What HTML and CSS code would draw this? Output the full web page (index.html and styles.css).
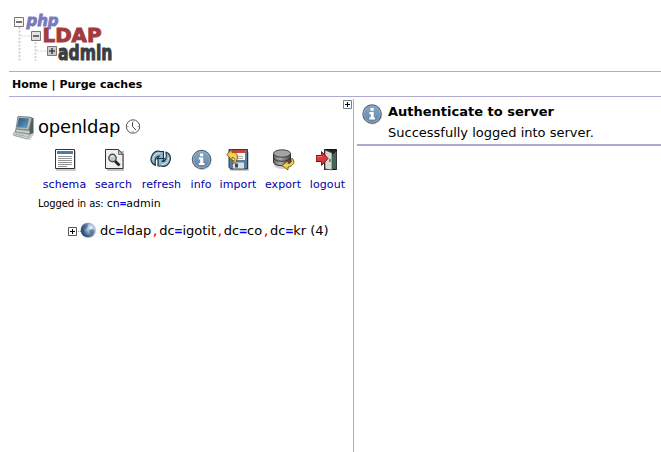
FILE: index.html
```html
<!DOCTYPE html>
<html lang="en">
<head>
<meta charset="utf-8">
<title>phpLDAPadmin</title>
<link rel="stylesheet" href="styles.css">
</head>
<body>
<svg width="0" height="0" class="defs" aria-hidden="true">
  <defs>
    <linearGradient id="box" x2="1" y2="1"><stop stop-color="#fff"/><stop offset="1" stop-color="#c4c4c4"/></linearGradient>
    <linearGradient id="steel" x2="0" y2="1"><stop stop-color="#83a5c6"/><stop offset="1" stop-color="#6588a8"/></linearGradient>
    <linearGradient id="screen" x2="1" y2="1"><stop stop-color="#245381"/><stop offset="1" stop-color="#6fa0c0"/></linearGradient>
    <radialGradient id="globe" cx=".7" cy=".35" r=".75"><stop stop-color="#f3f8fc"/><stop offset=".45" stop-color="#86a8cc"/><stop offset="1" stop-color="#1c3763"/></radialGradient>
    <linearGradient id="disk"><stop stop-color="#666"/><stop offset=".4" stop-color="#aaa"/><stop offset="1" stop-color="#444"/></linearGradient>
    <symbol id="info" viewBox="0 0 22 22">
      <circle cx="11.600" cy="11.800" r="9.600" fill="#999" opacity=".6"/>
      <circle cx="11" cy="11" r="9.700" fill="#4c5a66"/>
      <circle cx="11" cy="11" r="8.700" fill="#a5b7c7"/>
      <circle cx="11" cy="11" r="8" fill="url(#steel)"/>
      <path d="M9.500 5h3.200v2.700H9.500zM8.300 9h4.400v5.500H14v2H8.300v-2h1.400V11H8.300z" fill="#fff"/>
    </symbol>
  </defs>
</svg>
<header class="header">
  <svg class="logo" width="104" height="54" viewBox="10 9 104 54">
    <g stroke="#d2d2d6" stroke-width="2" stroke-dasharray="2 1.500" fill="none">
      <path d="M19.500 27v34M35.500 42v19"/><path d="M21 36h10M37 51h10" stroke-width="1.200"/>
    </g>
    <g font-family="DejaVu Sans" font-weight="bold">
      <text x="26.500" y="26" font-size="16.500" font-style="italic" textLength="32" lengthAdjust="spacingAndGlyphs" fill="#777bbd" stroke="#777bbd" stroke-width="1">php</text>
      <text x="42.500" y="42" font-size="20" textLength="59" lengthAdjust="spacingAndGlyphs" fill="#a03c3e" stroke="#a03c3e" stroke-width="1">LDAP</text>
      <text x="58" y="59.500" font-size="21" textLength="54.500" lengthAdjust="spacingAndGlyphs" fill="#3c3d3f" stroke="#3c3d3f" stroke-width="1">admin</text>
    </g>
    <g fill="url(#box)" stroke="#777"><path d="M14.500 17.500h9v9h-9zM31.500 31.500h9v9h-9zM47.500 46.500h9v9h-9z"/></g>
    <path d="M16 22h6M33 36h6M49 51h6M52 48v6" stroke="#444" stroke-width="1.600"/>
  </svg>
</header>
<nav class="menu"><a>Home</a> <span class="sep">|</span> <a>Purge caches</a></nav>
<main class="main">
  <aside class="tree">
    <svg class="expand" width="9" height="9"><path d="M.5.5h8v8h-8z" fill="#fff" stroke="#6c8390"/><path d="M2 4.500h5M4.500 2v5" stroke="#000"/></svg>
    <div class="server">
      <svg width="24" height="26" viewBox="12 114 24 26">
        <path d="M17 133l15 1 1-3 1 3-4 6-16-4z" fill="#999" opacity=".5"/>
        <path d="M28 117l5.500 1v15l-5 2z" fill="#4f5c61"/>
        <path d="M18 116.500l11 .5 3 1-3 12-13-1z" fill="#b2bdbc" stroke="#66716d" stroke-width=".8"/>
        <path d="M19 118l10 .5-2 9.500-10-.8z" fill="url(#screen)"/>
        <path d="M16 129l14 1.500v3.500l-15-2z" fill="#c3cbc8" stroke="#68726c" stroke-width=".7"/>
        <path d="M14.500 132l15 2.500-2.500 4.500-14-4z" fill="#d5dad5" stroke="#8a918c" stroke-width=".7"/>
        <path d="M15 134l12 2.500M17 133l-1 2M20 133.500l-1 3M23 134l-1 3" stroke="#929994" stroke-width=".6"/>
      </svg>
      <span class="server-name">openldap</span>
      <svg width="16" height="16" viewBox="0 0 16 16"><circle cx="8" cy="7.500" r="6.700" fill="#fff" stroke="#555"/><path d="M8 2v1.500M8 12V13.500M2 7.500h1.500M12.500 7.500H14" stroke="#999"/><path d="M7.500 3.500v4l3.500 3.500" fill="none" stroke="#444"/></svg>
    </div>
    <div class="tools">
      <a class="tool w44"><svg width="24" height="24" viewBox="0 0 24 24">
        <path d="M3 3h20v20H3z" fill="#aaa" opacity=".6"/><path d="M2.500 1.500h19v19h-19z" fill="#fff" stroke="#333"/>
        <path d="M4 3h16v3H4z" fill="#5279a5"/>
        <path d="M5 8.500h14M5 10.500h14M5 12.500h14M5 14.500h14M5 16.500h14M5 18.500h9" stroke="#92969b"/>
      </svg><span>schema</span></a>
      <a class="tool w38"><svg width="24" height="24" viewBox="0 0 24 24">
        <path d="M5 3h17v20H5z" fill="#999" opacity=".6"/><path d="M3.500 1.500h13l4.500 5V20.500H3.500z" fill="#f1f1ec" stroke="#333"/><path d="M16.500 2v4.500H21z" fill="#bbb" stroke="#555" stroke-width=".8"/>
        <path d="M12.500 12.500l5 5" stroke="#222" stroke-width="2.800"/><circle cx="10.500" cy="10" r="3.700" fill="#bacbd2" stroke="#4a5051" stroke-width="1.400"/><path d="M8.500 9.500q1-2 3-1.500" fill="none" stroke="#fff"/>
      </svg><span>search</span></a>
      <a class="tool w42"><svg width="24" height="24" viewBox="1.500 0 24 24">
        <g stroke="#1d3340" stroke-width="1.200" fill="#8eb4cc" stroke-linejoin="round">
          <path d="M7 17.500C2.500 16 1.500 11 3.500 7.500 5 4.300 8 2.500 12 3.500h3V11H8.500l2.300-3C7.500 8 6 11 7 17.500z"/>
          <path d="M17.500 4C22 5.500 23 10.500 21 14c-1.500 3.200-4.500 5-8.500 4h-3V10.500H16l-2.300 3c3.300 0 4.800-3 3.800-9.500z"/>
        </g><path d="M4.600 12c-.2-4 3-7 7-7M20 9.500c.2 4-3 7-7 7" fill="none" stroke="#dcebf4"/>
      </svg><span>refresh</span></a>
      <a class="tool w21"><svg width="24" height="24" viewBox="-1.500 -.5 24 24"><use href="#info" width="22" height="22"/></svg><span>info</span></a>
      <a class="tool w37"><svg width="24" height="24" viewBox="0 0 24 24">
        <path d="M4 4h19v19H4z" fill="#999" opacity=".5"/><path d="M3 1.500h18.500v19.500H5L3 19.500z" fill="#587c9d" stroke="#263746"/>
        <path d="M6 2h13v10H6z" fill="#fff"/><path d="M6 2h13v3H6z" fill="#c54637"/><path d="M8 8.500h9M8 10.500h9" stroke="#aaa"/>
        <path d="M7 14.500h11v6H7z" fill="#d9dedf"/><path d="M9 15.500h3v4H9z" fill="#344b61"/>
        <path d="M.8 6.500L6 1.500v3c5-1 7 4 4 9-1 2-3 2-4 2 3-3 3-6 0-6v3z" fill="#f4cf55" stroke="#74540b" stroke-width=".9"/>
      </svg><span>import</span></a>
      <a class="tool w37"><svg width="24" height="24" viewBox="-1 0 24 24">
        <ellipse cx="11" cy="17" rx="9" ry="4" fill="#888" opacity=".4"/>
        <path d="M1.500 5v9c0 5 17 5 17 0V5" fill="url(#disk)" stroke="#303030"/><path d="M1.500 9.500c0 5 17 5 17 0" fill="none" stroke="#333"/>
        <ellipse cx="10" cy="5.500" rx="8.500" ry="3.700" fill="#a4a4a4" stroke="#444"/>
        <path d="M20 10c4 4 1 8-4 9v3l-6-4.500 6-4.500v2.500c3 0 4-2 4-5.500z" fill="#f3cf58" stroke="#74540b" stroke-width=".9"/>
      </svg><span>export</span></a>
      <a class="tool w36"><svg width="24" height="24" viewBox="1.500 0 24 24">
        <path d="M10 1.500h12v20H10z" fill="#1e2923" stroke="#151515"/><path d="M18 7l4-4v18h-8z" fill="#456653"/>
        <path d="M10.500 2l7 3v17l-7-1z" fill="#d4d9d4" stroke="#4a4f4a" stroke-width=".7"/><path d="M15.500 11v3" stroke="#555" stroke-width="1.300"/>
        <path d="M1.500 7.500H7v-4l6.500 7L7 17.500v-4H1.500z" fill="#d73935" stroke="#731717"/><path d="M2.500 8.700h5" stroke="#f47a70"/>
      </svg><span>logout</span></a>
    </div>
    <div class="login">Logged in as: <span class="login-dn">cn<b class="eq">=</b>admin</span></div>
    <div class="entry">
      <svg width="32" height="18" viewBox="0 0 32 18"><path d="M.5 5.500h8v8h-8z" fill="#fff" stroke="#555"/><path d="M2 9.500h5M4.500 7v5" stroke="#000"/><path d="M10 9.500h3" stroke="#999" stroke-dasharray="1 1"/>
        <circle cx="20.500" cy="8.500" r="7.700" fill="#aaa" opacity=".5"/><circle cx="20" cy="8" r="7.300" fill="url(#globe)"/><path d="M14 5q4-4 6-2l-1 3-3 2 1 4-3-2zM21 8l4-1 1 3-3 3z" fill="#29466f" opacity=".5"/></svg>
      <span class="dn">dc<b class="eq">=</b>ldap<i class="comma">,</i>dc<b class="eq">=</b>igotit<i class="comma">,</i>dc<b class="eq">=</b>co<i class="comma">,</i>dc<b class="eq">=</b>kr (4)</span>
    </div>
  </aside>
  <section class="content">
    <div class="message">
      <svg width="22" height="22" viewBox="0 0 22 22"><use href="#info" width="22" height="22"/></svg>
      <div><h1>Authenticate to server</h1><p>Successfully logged into server.</p></div>
    </div>
  </section>
</main>
</body>
</html>
```
FILE: styles.css
```css
* { box-sizing: border-box; }
body {
  margin: 0 0 0 9px;
  height: 452px;
  overflow: hidden;
  background: #fff;
  color: #000;
  font: 13px/16px "DejaVu Sans", sans-serif;
}
svg { display: block; flex: none; }
.defs { position: absolute; }
.header { height: 71px; padding: 9px 0 0 1px; }
.logo { overflow: visible; }
.menu {
  height: 26px;
  padding-left: 3px;
  border-top: 1px solid #b0a8d0;
  border-bottom: 1px solid #b0a8d0;
  font-size: 11px;
  font-weight: bold;
  line-height: 26px;
}
.main { display: flex; height: 355px; padding-top: 2px; }
.tree { width: 345px; border-right: 1px solid #b0a8d0; }
.expand { margin: 1px 1px 0 auto; }
.server { display: flex; align-items: center; height: 26px; margin: 5px 0 0 3px; }
.server-name { width: 89px; padding-left: 2px; font-size: 18px; line-height: 24px; letter-spacing: -.2px; }
.tools { display: flex; gap: 8px; margin: 8px 0 0 34px; }
.tool {
  display: flex;
  flex-direction: column;
  align-items: center;
  flex: none;
  color: #0000aa;
  font-size: 11px;
  line-height: 14px;
  letter-spacing: .1px;
  white-space: nowrap;
}
.tool svg { margin-left: -1px; }
.tool span { margin: 6px 0 0 -1px; }
.w44 { width: 44px; }
.w42 { width: 42px; }
.w38 { width: 38px; }
.w37 { width: 37px; }
.w36 { width: 36px; }
.w21 { width: 21px; }
.login { margin: 5px 0 0 29px; font-size: 10px; line-height: 14px; letter-spacing: -.1px; }
.login-dn { font-size: 11px; letter-spacing: 0; }
.entry { display: flex; align-items: center; height: 18px; margin: 11px 0 0 59px; white-space: nowrap; }
.eq { color: #00f; font-family: "DejaVu Sans Mono", monospace; font-weight: bold; }
.comma { color: #f00; font: 13px "DejaVu Sans Mono", monospace; }
.content { flex: 1; padding-left: 3px; }
.message { display: flex; height: 47px; padding: 5px 0 0 4px; border-bottom: 2px solid #b0a8d0; }
.message svg { margin-top: -1px; }
.message div { margin-left: 5px; }
.message h1, .message p { margin: 0; font-size: 13px; line-height: 16px; }
.message p { margin-top: 5px; }
```
